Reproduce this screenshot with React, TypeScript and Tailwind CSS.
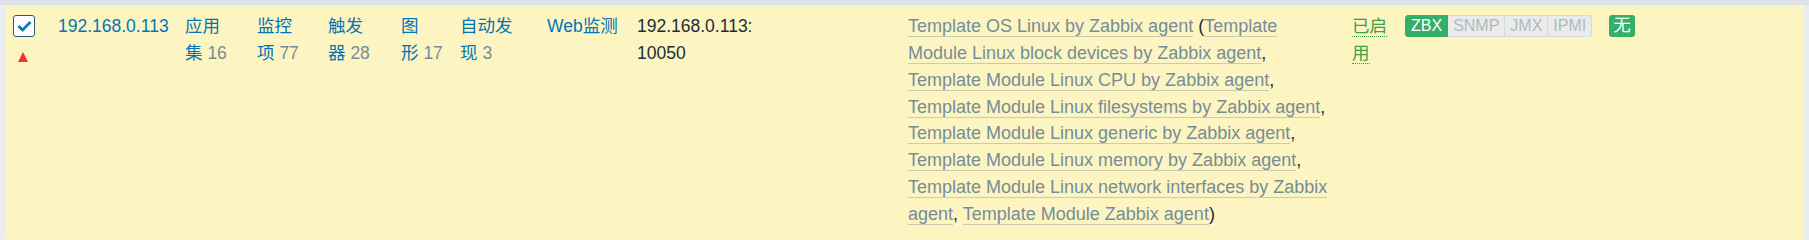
import React from 'react';

const FONT = { fontFamily: '"Liberation Sans", Arial, "Noto Sans CJK SC", sans-serif' };

const TEMPLATES = [
  'Template Module Linux block devices by Zabbix agent',
  'Template Module Linux CPU by Zabbix agent',
  'Template Module Linux filesystems by Zabbix agent',
  'Template Module Linux generic by Zabbix agent',
  'Template Module Linux memory by Zabbix agent',
  'Template Module Linux network interfaces by Zabbix agent',
  'Template Module Zabbix agent',
];

// two-line link + count, e.g. 应用 / 集 16
function CountCell({ top, bottom, num, w }: { top: string; bottom: string; num?: number; w: string }) {
  return (
    <div className={`${w} shrink-0`}>
      <a className="block text-[#0275b8] whitespace-nowrap">{top}</a>
      <div className="whitespace-nowrap">
        <a className="text-[#0275b8]">{bottom}</a>
        {num !== undefined && <span className="text-[#768d99]"> {num}</span>}
      </div>
    </div>
  );
}

function TplLink({ children }: { children: React.ReactNode }) {
  return <a className="text-[#768d99] border-b border-[#768d99]/40">{children}</a>;
}

function Chip({ label, on, first, last }: { label: string; on?: boolean; first?: boolean; last?: boolean }) {
  return (
    <span
      className={`h-[22px] px-[5px] flex items-center text-[16px] leading-none border ${
        on ? 'bg-[#34af67] border-[#34af67] text-white' : 'bg-[#ebebeb] border-[#d5dbde] text-[#acbbc2]'
      } ${first ? 'rounded-l-[3px]' : 'border-l-0'} ${last ? 'rounded-r-[3px]' : ''}`}
    >
      {label}
    </span>
  );
}

export default function App() {
  return (
    <div className="w-[1809px] h-[240px] bg-[#e9edf0] overflow-hidden" style={FONT}>
      <div className="h-[5px] bg-[#dde3e9]" />
      <div className="ml-[5px] mr-[5px] h-[234px] bg-[#fcf5c1] border-r border-[#f4f4ee] flex pt-[8px] text-[17.5px] leading-[26.86px] text-[#1f2c33]">
        {/* checkbox + problem marker */}
        <div className="w-[53px] shrink-0 pl-[8px] pt-[2px]">
          <div className="w-[22px] h-[22px] bg-white border border-[#2b5a7e] rounded-[3px] flex items-center justify-center">
            <svg width="15" height="12" viewBox="0 0 15 12">
              <path d="M1.5 6 L5.6 10 L13.5 2" fill="none" stroke="#0f7bbd" strokeWidth="2.8" />
            </svg>
          </div>
          <div className="mt-[15px] ml-[5px] w-0 h-0 border-l-[5px] border-r-[5px] border-b-[10px] border-l-transparent border-r-transparent border-b-[#f03434]" />
        </div>

        <div className="w-[127px] shrink-0">
          <a className="text-[#0275b8]">192.168.0.113</a>
        </div>

        <CountCell w="w-[72px]" top="应用" bottom="集" num={16} />
        <CountCell w="w-[71px]" top="监控" bottom="项" num={77} />
        <CountCell w="w-[73px]" top="触发" bottom="器" num={28} />
        <CountCell w="w-[59px]" top="图" bottom="形" num={17} />
        <CountCell w="w-[87px]" top="自动发" bottom="现" num={3} />

        <div className="w-[90px] shrink-0">
          <a className="text-[#0275b8]">Web监测</a>
        </div>

        <div className="w-[271px] shrink-0">
          <div>192.168.0.113:</div>
          <div>10050</div>
        </div>

        <div className="w-[444px] shrink-0 pr-[12px] text-[18px]">
          <TplLink>Template OS Linux by Zabbix agent</TplLink> (
          {TEMPLATES.map((t, i) => (
            <React.Fragment key={t}>
              <TplLink>{t}</TplLink>
              {i < TEMPLATES.length - 1 ? ', ' : ')'}
            </React.Fragment>
          ))}
        </div>

        <div className="w-[53px] shrink-0">
          <div className="w-[36px]">
            <a className="text-[#429e47] border-b border-dotted border-[#429e47]">已启用</a>
          </div>
        </div>

        <div className="w-[204px] shrink-0 pt-[2px]">
          <div className="flex">
            <Chip label="ZBX" on first />
            <Chip label="SNMP" />
            <Chip label="JMX" />
            <Chip label="IPMI" last />
          </div>
        </div>

        <div className="shrink-0 pt-[2px]">
          <span className="h-[22px] w-[26px] flex items-center justify-center rounded-[3px] bg-[#34af67] text-white text-[17.5px] leading-none">
            无
          </span>
        </div>
      </div>
    </div>
  );
}
